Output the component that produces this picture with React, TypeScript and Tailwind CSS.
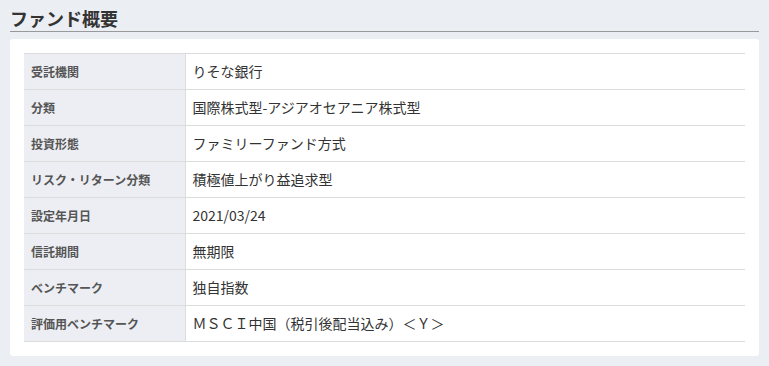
import React from 'react';

const rows: [string, string][] = [
  ['受託機関', 'りそな銀行'],
  ['分類', '国際株式型-アジアオセアニア株式型'],
  ['投資形態', 'ファミリーファンド方式'],
  ['リスク・リターン分類', '積極値上がり益追求型'],
  ['設定年月日', '2021/03/24'],
  ['信託期間', '無期限'],
  ['ベンチマーク', '独自指数'],
  ['評価用ベンチマーク', 'ＭＳＣＩ中国（税引後配当込み）＜Ｙ＞'],
];

export default function App() {
  return (
    <div
      className="min-h-[366px] w-[769px] bg-[#ebeef2] px-[10px] pt-[6px] text-[#333]"
      style={{ fontFamily: '"Noto Sans CJK JP", "Noto Sans", sans-serif' }}
    >
      <h2 className="border-b border-[#999] pb-[1px] text-[18px] font-bold leading-[24px] text-[#333]">
        ファンド概要
      </h2>
      <div className="mt-[7px] rounded-[3px] bg-white px-[14px] pt-[14px] pb-[14px]">
        <table className="w-full border-collapse">
          <tbody>
            {rows.map(([label, value]) => (
              <tr key={label} className="h-[36px] border-y border-[#dcdcdc]">
                <th className="w-[161px] border-r border-[#dcdcdc] bg-[#eceef3] pl-[7px] text-left text-[12px] font-bold text-[#555]">
                  {label}
                </th>
                <td className="pl-[7px] text-[14px] text-[#333]">{value}</td>
              </tr>
            ))}
          </tbody>
        </table>
      </div>
    </div>
  );
}
